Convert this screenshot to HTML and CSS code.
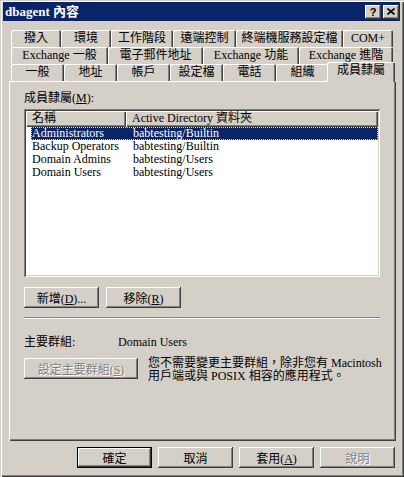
FILE: index.html
```html
<!DOCTYPE html>
<html lang="zh-Hant">
<head>
    <meta charset="UTF-8">
    <title>dbagent 內容</title>
    <link rel="stylesheet" href="styles.css">
</head>
<body>
    <div class="window">
        <div class="titlebar">
            <span class="title">dbagent 內容</span>
            <div class="caption-btns">
                <button class="cap-btn help">?</button>
                <button class="cap-btn close">
                    <svg width="8" height="7" viewBox="0 0 8 7"><path d="M0.5 0.5 L7.5 6.5 M7.5 0.5 L0.5 6.5" stroke="#000" stroke-width="1.6" fill="none"/></svg>
                </button>
            </div>
        </div>

        <div class="tabs">
            <div class="tab-row row-back">
                <div class="tab">撥入</div>
                <div class="tab">環境</div>
                <div class="tab">工作階段</div>
                <div class="tab">遠端控制</div>
                <div class="tab">終端機服務設定檔</div>
                <div class="tab">COM+</div>
            </div>
            <div class="tab-row row-mid">
                <div class="tab">Exchange 一般</div>
                <div class="tab">電子郵件地址</div>
                <div class="tab">Exchange 功能</div>
                <div class="tab">Exchange 進階</div>
            </div>
            <div class="tab-row row-front">
                <div class="tab">一般</div>
                <div class="tab">地址</div>
                <div class="tab">帳戶</div>
                <div class="tab">設定檔</div>
                <div class="tab">電話</div>
                <div class="tab">組織</div>
                <div class="tab active">成員隸屬</div>
            </div>
        </div>

        <div class="panel">
            <div class="field-label">成員隸屬(<u>M</u>):</div>
            <div class="listview">
                <div class="lv-header">
                    <div class="lv-head name-col">名稱</div>
                    <div class="lv-head folder-col">Active Directory 資料夾</div>
                </div>
                <div class="lv-body">
                    <div class="lv-row selected">
                        <span class="lv-cell name-col">Administrators</span>
                        <span class="lv-cell">babtesting/Builtin</span>
                    </div>
                    <div class="lv-row">
                        <span class="lv-cell name-col">Backup Operators</span>
                        <span class="lv-cell">babtesting/Builtin</span>
                    </div>
                    <div class="lv-row">
                        <span class="lv-cell name-col">Domain Admins</span>
                        <span class="lv-cell">babtesting/Users</span>
                    </div>
                    <div class="lv-row">
                        <span class="lv-cell name-col">Domain Users</span>
                        <span class="lv-cell">babtesting/Users</span>
                    </div>
                </div>
            </div>

            <div class="list-buttons">
                <button class="btn">新增(<u>D</u>)...</button>
                <button class="btn">移除(<u>R</u>)</button>
            </div>

            <div class="separator"></div>

            <div class="primary-row">
                <span class="primary-label">主要群組:</span>
                <span>Domain Users</span>
            </div>

            <div class="set-primary">
                <button class="btn wide" disabled>設定主要群組(<u>S</u>)</button>
                <p class="hint">您不需要變更主要群組，除非您有 Macintosh<br>用戶端或與 POSIX 相容的應用程式。</p>
            </div>
        </div>

        <div class="dialog-buttons">
            <button class="btn default">確定</button>
            <button class="btn">取消</button>
            <button class="btn">套用(<u>A</u>)</button>
            <button class="btn" disabled>說明</button>
        </div>
    </div>
</body>
</html>
```

FILE: styles.css
```css
* {
    box-sizing: border-box;
}

body {
    margin: 0;
    background-color: #d4d0c8;
    font-family: "Liberation Serif", "Noto Sans CJK TC", serif;
    font-size: 12px;
    color: #000;
}

u {
    text-underline-offset: 1px;
}

.window {
    width: 404px;
    height: 477px;
    padding: 2px 4px 4px 3px;
    background-color: #d4d0c8;
    box-shadow: inset 1px 1px #d4d0c8, inset 2px 2px #fff, inset -1px -1px #404040, inset -2px -2px #808080;
}

/* title bar */
.titlebar {
    height: 19px;
    display: flex;
    align-items: center;
    justify-content: space-between;
    padding: 0 1px 0 2px;
    background-color: #0a246a;
    color: #fff;
}

.title {
    font-weight: bold;
    font-size: 13px;
    line-height: 19px;
}

.caption-btns {
    display: flex;
    gap: 2px;
}

.cap-btn {
    width: 16px;
    height: 14px;
    padding: 0;
    border: none;
    display: flex;
    align-items: center;
    justify-content: center;
    background-color: #d4d0c8;
    box-shadow: inset -1px -1px #404040, inset 1px 1px #fff, inset -2px -2px #808080;
    font-family: "Liberation Sans", sans-serif;
    font-weight: bold;
    font-size: 11px;
    line-height: 14px;
    color: #000;
}

/* tabs */
.tabs {
    margin: 9px 0 0 8px;
    width: 382px;
}

.tab-row {
    display: grid;
    height: 17px;
}

.row-back {
    grid-template-columns: 50px 50px 62px 63px 107px 50px;
}

.row-mid {
    grid-template-columns: 97px 95px 96px 94px;
}

.row-front {
    grid-template-columns: repeat(6, 53px) 64px;
}

.tab {
    height: 17px;
    line-height: 17px;
    text-align: center;
    white-space: nowrap;
    background-color: #d4d0c8;
    border-radius: 2px 2px 0 0;
    box-shadow: inset 1px 1px #fff, inset -1px 0 #404040, inset -2px 0 #808080;
}

.tab.active {
    position: relative;
    z-index: 1;
    height: 20px;
    margin: -2px -2px -1px -2px;
}

/* tab page */
.panel {
    width: 387px;
    height: 360px;
    margin-left: 6px;
    padding: 10px 15px 0 15px;
    box-shadow: inset 1px 1px #fff, inset -1px -1px #404040, inset -2px -2px #808080;
}

.field-label {
    line-height: 14px;
}

.listview {
    margin-top: 4px;
    width: 356px;
    height: 168px;
    padding: 2px;
    background-color: #fff;
    box-shadow: inset 1px 1px #808080, inset -1px -1px #fff, inset 2px 2px #404040, inset -2px -2px #d4d0c8;
}

.lv-header {
    display: flex;
    height: 16px;
}

.lv-head {
    height: 16px;
    line-height: 15px;
    padding-left: 6px;
    background-color: #d4d0c8;
    white-space: nowrap;
    box-shadow: inset 1px 1px #fff, inset -1px -1px #404040, inset -2px -2px #808080;
}

.lv-head.name-col {
    width: 100px;
}

.lv-head.folder-col {
    flex: 1;
}

.lv-row {
    display: flex;
    height: 13px;
    line-height: 13px;
    margin-left: 5px;
    white-space: nowrap;
}

.lv-row.selected {
    background-color: #0a246a;
    color: #fff;
    outline: 1px dotted #f0e060;
    outline-offset: -1px;
}

.lv-cell {
    padding-left: 1px;
}

.lv-cell.name-col {
    width: 101px;
}

/* buttons */
.btn {
    width: 75px;
    height: 21px;
    padding: 0;
    border: none;
    background-color: #d4d0c8;
    font: inherit;
    color: #000;
    box-shadow: inset -1px -1px #404040, inset 1px 1px #fff, inset -2px -2px #808080;
}

.btn.default {
    box-shadow: inset 0 0 0 1px #000, inset -2px -2px #404040, inset 2px 2px #fff, inset -3px -3px #808080;
}

.btn:disabled {
    color: #808080;
    text-shadow: 1px 1px #fff;
}

.btn.wide {
    width: 114px;
    flex: none;
}

.list-buttons {
    display: flex;
    gap: 7px;
    margin-top: 10px;
}

.separator {
    width: 356px;
    height: 2px;
    margin-top: 9px;
    border-top: 1px solid #808080;
    border-bottom: 1px solid #fff;
}

.primary-row {
    display: flex;
    margin-top: 16px;
    line-height: 14px;
}

.primary-label {
    width: 94px;
}

.set-primary {
    display: flex;
    gap: 10px;
    margin-top: 9px;
}

.hint {
    margin: -1px 0 0 0;
    line-height: 13px;
    white-space: nowrap;
}

.dialog-buttons {
    display: flex;
    justify-content: flex-end;
    gap: 6px;
    width: 387px;
    margin: 6px 0 0 6px;
    padding-right: 1px;
}
```
